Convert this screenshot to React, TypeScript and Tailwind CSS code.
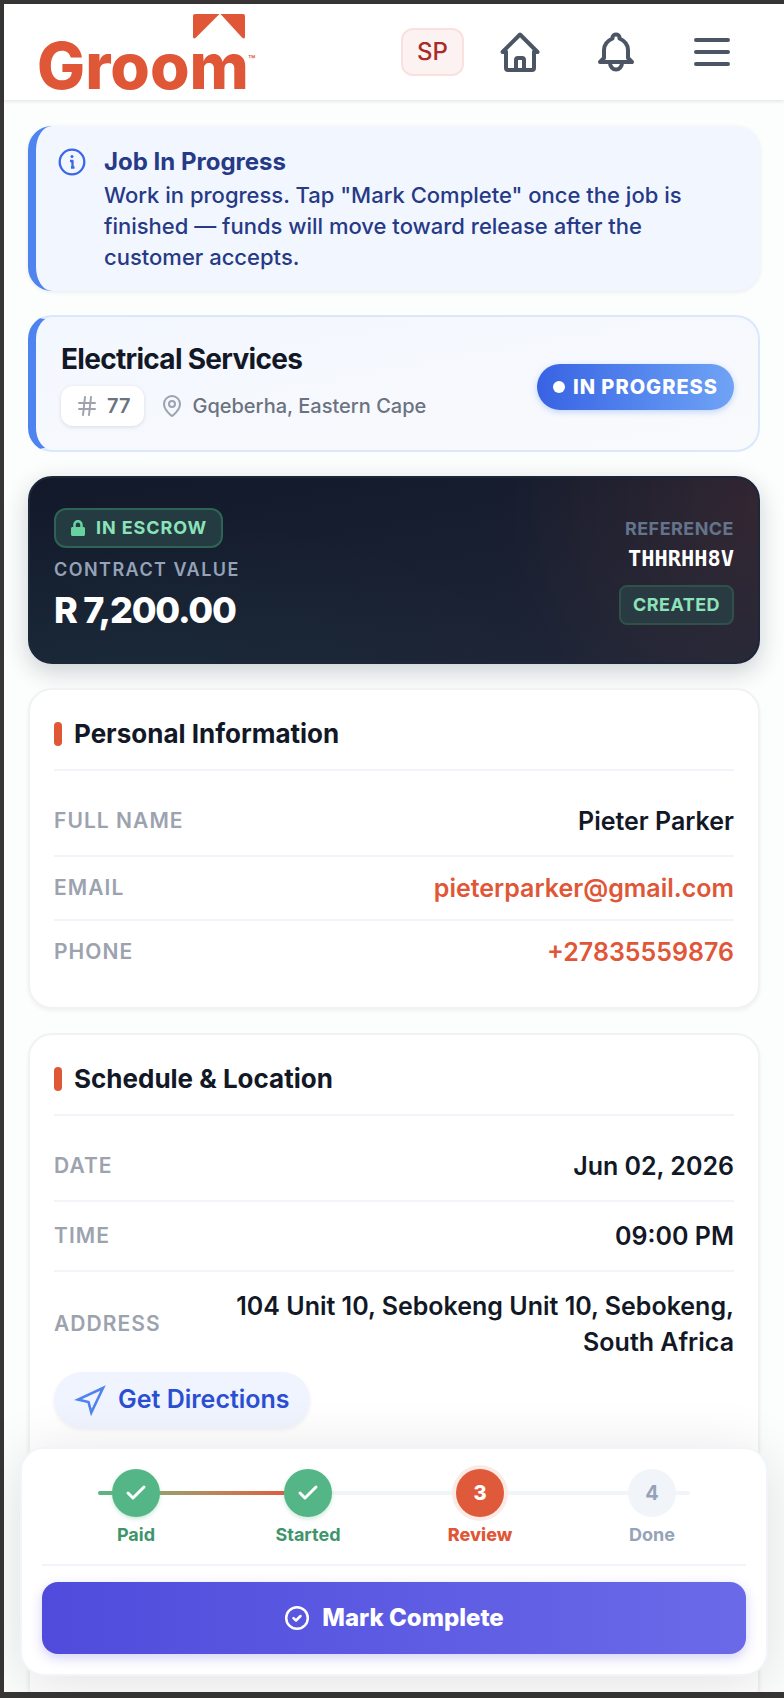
import type { ReactNode } from "react";
import { FaLock } from "react-icons/fa";
import { Check, Hash, MapPin } from "lucide-react";

const steps = [
  { label: "Paid", state: "done" },
  { label: "Started", state: "done" },
  { label: "Review", state: "current" },
  { label: "Done", state: "todo" },
];

function Logo() {
  return (
    <svg className="overflow-visible" width="230" height="96" viewBox="0 0 230 96" role="img" aria-label="Groom">
      <g fill="#df5737">
        <path d="M159 10h24.500L160 33.500q-3 2.500-3-1V12q0-2 2-2zM184.500 10H207q2 0 2 2v20.500q0 3.500-3 1z" />
        <text x="1" y="85" fontSize="64" className="font-['Inter',sans-serif] font-extrabold">
          Groom
        </text>
        <text x="212" y="60" fontSize="12" className="font-['Inter',sans-serif] font-medium">
          ™
        </text>
      </g>
    </svg>
  );
}

function HomeIcon() {
  return (
    <svg width="48" height="48" viewBox="0 0 48 48" fill="none" stroke="currentColor" strokeWidth="4" strokeLinecap="round" strokeLinejoin="round">
      <path d="M10 24H6.500L24 6.500 41.500 24H38" />
      <path d="M10 24v16a2 2 0 0 0 2 2h24a2 2 0 0 0 2-2V24" />
      <path d="M20 42V32a2 2 0 0 1 2-2h4a2 2 0 0 1 2 2v10" />
    </svg>
  );
}

function BellIcon() {
  return (
    <svg width="48" height="48" viewBox="0 0 48 48" fill="none" stroke="currentColor" strokeWidth="4" strokeLinecap="round" strokeLinejoin="round">
      <path d="M20.500 9.500C20.500 5.500 27.500 5.500 27.500 9.500V10.500C33 13 36 16.500 36 22V30L40 34H8L12 30V22C12 16.500 15 13 20.500 10.500Z" />
      <path d="M18 35a6 6.500 0 0 0 12 0" />
    </svg>
  );
}

function MenuIcon() {
  return (
    <svg width="48" height="48" viewBox="0 0 48 48" fill="none" stroke="currentColor" strokeWidth="4" strokeLinecap="round">
      <path d="M8 12h32M8 24h32M8 36h32" />
    </svg>
  );
}

function InfoIcon() {
  return (
    <svg className="shrink-0 text-[#3b66e8]" width="28" height="28" viewBox="0 0 28 28" fill="none" stroke="currentColor" strokeWidth="2.300" strokeLinejoin="round">
      <circle cx="14" cy="14" r="12.300" />
      <circle cx="14" cy="8.500" r="1.500" fill="currentColor" stroke="none" />
      <path d="M12 13h2.500v6.500M13 19.500h3.500" />
    </svg>
  );
}

function DirectionsIcon() {
  return (
    <svg className="shrink-0 text-[#4f83f0]" width="32" height="32" viewBox="0 0 32 32" fill="none" stroke="currentColor" strokeWidth="2.600">
      <path d="M29 4L4 15.500l10.500 2.500 2.800 10.500z" />
    </svg>
  );
}

function Header() {
  return (
    <header className="relative z-10 flex h-24 shrink-0 items-center justify-between bg-white pl-8 pr-12 shadow-[0_1px_4px_rgba(0,0,0,0.12)]">
      <a href="#">
        <Logo />
      </a>
      <nav className="flex items-center gap-12 text-[#4b5563]">
        <div className="flex items-center gap-8">
          <button aria-label="Profile" className="h-12 w-[63px] rounded-xl border-2 border-[#fae0df] bg-[#fdf2f2] text-2xl font-medium text-[#aa2c26]">
            SP
          </button>
          <a href="#" aria-label="Home">
            <HomeIcon />
          </a>
        </div>
        <button aria-label="Notifications">
          <BellIcon />
        </button>
        <button aria-label="Menu">
          <MenuIcon />
        </button>
      </nav>
    </header>
  );
}

function Notice() {
  return (
    <section className="flex gap-[18px] rounded-3xl border-l-8 border-[#4f83f0] bg-[#f2f6ff] py-[18px] pl-[22px] pr-6 text-[#263a86] shadow-[0_1px_4px_rgba(0,0,0,0.08)]">
      <div className="pt-1">
        <InfoIcon />
      </div>
      <div>
        <h2 className="text-2xl leading-9 font-bold">Job In Progress</h2>
        <p className="text-[22px] leading-[31px] font-medium">
          Work in progress. Tap "Mark Complete" once the job is finished — funds will move toward release after the
          customer accepts.
        </p>
      </div>
    </section>
  );
}

function JobCard() {
  return (
    <section className="flex items-center justify-between rounded-3xl border-2 border-l-8 border-[#dbe8fc] border-l-[#4f83f0] bg-gradient-to-br from-[#f3f7ff] to-[#f9fafc] py-6 pl-[25px] pr-6">
      <div>
        <h1 className="text-[28px] leading-[37px] font-bold tracking-tight text-[#121826]">Electrical Services</h1>
        <div className="mt-2 flex items-center gap-4 text-xl font-medium text-[#6b7280]">
          <span className="flex h-10 items-center gap-2 rounded-xl bg-white px-[14px] font-semibold shadow-[0_1px_4px_rgba(0,0,0,0.12)]">
            <Hash className="size-6 text-[#9ca3af]" />
            77
          </span>
          <span className="flex items-center gap-2">
            <MapPin className="size-6 text-[#9ca3af]" />
            Gqeberha, Eastern Cape
          </span>
        </div>
      </div>
      <span className="mb-4 flex h-[46px] items-center gap-2 self-end rounded-full bg-gradient-to-r from-[#3962e3] to-[#70a3f5] px-4 text-xl font-extrabold tracking-wider text-white shadow-[0_2px_6px_rgba(59,130,246,0.3)]">
        <span className="size-3 rounded-full bg-white" />
        IN PROGRESS
      </span>
    </section>
  );
}

function EscrowCard() {
  return (
    <section className="flex items-center justify-between rounded-3xl border-2 border-[#1d273a] bg-[radial-gradient(260px_circle_at_100%_15%,rgba(223,87,55,0.13),transparent),radial-gradient(420px_150px_at_10%_100%,rgba(16,185,129,0.05),transparent),linear-gradient(170deg,#12192b,#1f2638)] px-6 py-[30px] shadow-[0_8px_24px_rgba(15,23,42,0.2)]">
      <div className="flex flex-col items-start">
        <span className="flex h-10 items-center gap-[10px] rounded-xl border-2 border-[#2f6354] bg-[#233b41] px-[14px] text-lg font-bold tracking-wider text-[#8ce3b9]">
          <FaLock className="size-4 text-[#68d39f]" />
          IN ESCROW
        </span>
        <span className="mt-2 text-lg leading-7 font-semibold tracking-[0.08em] text-[#94a3b8]">CONTRACT VALUE</span>
        <span className="mt-1 text-4xl leading-[44px] font-extrabold tracking-[-0.035em] text-white">R 7,200.00</span>
      </div>
      <div className="flex flex-col items-end">
        <span className="text-lg leading-7 font-bold tracking-wide text-[#64748b]">REFERENCE</span>
        <span className="font-['DejaVu_Sans_Mono',monospace] text-[22px] leading-8 font-bold text-white">THHRHH8V</span>
        <span className="mt-[10px] flex h-10 items-center rounded-lg border-2 border-[#2f5148] bg-[#2a3a42] px-3 text-lg font-bold tracking-wide text-[#8ce3b9]">
          CREATED
        </span>
      </div>
    </section>
  );
}

function InfoCard({ title, children }: { title: string; children: ReactNode }) {
  return (
    <section className="rounded-3xl border-2 border-[#f1f3f3] bg-white p-6 shadow-[0_2px_4px_rgba(0,0,0,0.05)]">
      <h2 className="mb-4 flex items-center gap-3 border-b-2 border-[#f1f5f9] pb-4 text-[26px] leading-[39px] font-bold text-[#121826]">
        <span className="h-6 w-2 rounded-full bg-[#df5737]" />
        {title}
      </h2>
      {children}
    </section>
  );
}

function Row({ label, last, children }: { label: string; last?: boolean; children: ReactNode }) {
  return (
    <div className={last ? "flex items-center justify-between gap-12 pt-4" : "flex items-center justify-between gap-12 border-b-2 border-[#f1f5f9] py-4"}>
      <dt className="text-[21px] leading-[30px] font-semibold tracking-wider text-[#9ca3af]">{label}</dt>
      <dd className="text-right text-[25px] leading-9 font-semibold text-[#121826]">{children}</dd>
    </div>
  );
}

function ContactLink({ href, children }: { href: string; children: ReactNode }) {
  return (
    <a href={href} className="block leading-[30px] text-[#df5737]">
      {children}
    </a>
  );
}

function ProgressBar() {
  return (
    <div className="relative border-b-2 border-[#f1f5f9] px-2 pb-[15px]">
      <div className="absolute top-[22px] right-14 left-14 h-1 rounded-full bg-[#f1f5f9]">
        <div className="h-full w-1/3 rounded-full bg-gradient-to-r from-[#54b586] to-[#df5737]" />
      </div>
      <ol className="relative grid grid-cols-4">
        {steps.map((step, i) => (
          <li key={step.label} className="flex flex-col items-center gap-1 text-lg leading-7 font-bold">
            {step.state === "done" && (
              <>
                <span className="flex size-12 items-center justify-center rounded-full bg-[#54b586] text-white shadow-[0_2px_4px_rgba(84,181,134,0.3)]">
                  <Check className="size-6" strokeWidth={3} />
                </span>
                <span className="text-[#3f956b]">{step.label}</span>
              </>
            )}
            {step.state === "current" && (
              <>
                <span className="flex size-12 items-center justify-center rounded-full bg-[#df5a3a] text-xl font-extrabold text-white ring-4 ring-[#fbebe7]">
                  {i + 1}
                </span>
                <span className="font-extrabold text-[#df5737]">{step.label}</span>
              </>
            )}
            {step.state === "todo" && (
              <>
                <span className="flex size-12 items-center justify-center rounded-full bg-[#f1f5f9] text-xl text-[#94a3b8]">
                  {i + 1}
                </span>
                <span className="text-[#94a3b8]">{step.label}</span>
              </>
            )}
          </li>
        ))}
      </ol>
    </div>
  );
}

function ActionBar() {
  return (
    <footer className="absolute right-4 bottom-4 left-4 z-20 rounded-3xl border-2 border-[#f1f5f9] bg-white p-5 shadow-[0_8px_60px_rgba(0,0,0,0.12)]">
      <ProgressBar />
      <button className="mt-4 flex h-[72px] w-full items-center justify-center gap-3 rounded-2xl bg-gradient-to-r from-[#504bdc] to-[#6a6ae9] text-2xl font-extrabold text-white shadow-[0_4px_12px_rgba(79,70,229,0.25)]">
        <svg width="26" height="26" viewBox="0 0 26 26" fill="none" stroke="currentColor" strokeWidth="2.500" strokeLinecap="round" strokeLinejoin="round">
          <circle cx="13" cy="13" r="10.800" />
          <path d="M9.500 13.200l2.500 2.300 4.500-4.500" />
        </svg>
        Mark Complete
      </button>
    </footer>
  );
}

function App() {
  return (
    <div className="relative flex h-screen flex-col border-t-4 border-b-[6px] border-l-4 border-[#373635] bg-[#fcfefd] font-['Inter',sans-serif]">
      <Header />
      <main className="flex min-h-0 flex-1 flex-col gap-6 overflow-y-auto px-6 pt-[26px] [scrollbar-width:none]">
        <Notice />
        <JobCard />
        <EscrowCard />
        <InfoCard title="Personal Information">
          <dl className="pb-4">
            <Row label="FULL NAME">Pieter Parker</Row>
            <Row label="EMAIL">
              <ContactLink href="mailto:pieterparker@gmail.com">pieterparker@gmail.com</ContactLink>
            </Row>
            <Row label="PHONE" last>
              <ContactLink href="tel:+27835559876">+27835559876</ContactLink>
            </Row>
          </dl>
        </InfoCard>
        <InfoCard title="Schedule & Location">
          <dl className="pb-3">
            <Row label="DATE">Jun 02, 2026</Row>
            <Row label="TIME">09:00 PM</Row>
            <Row label="ADDRESS" last>
              104 Unit 10, Sebokeng Unit 10, Sebokeng, South Africa
            </Row>
          </dl>
          <a href="#" className="mb-64 inline-flex h-14 items-center gap-3 rounded-full bg-[#f0f4fe] px-5 text-[25px] font-semibold text-[#2b4fd3] shadow-[0_2px_4px_rgba(0,0,0,0.06)]">
            <DirectionsIcon />
            Get Directions
          </a>
        </InfoCard>
      </main>
      <ActionBar />
    </div>
  );
}

export default App;
